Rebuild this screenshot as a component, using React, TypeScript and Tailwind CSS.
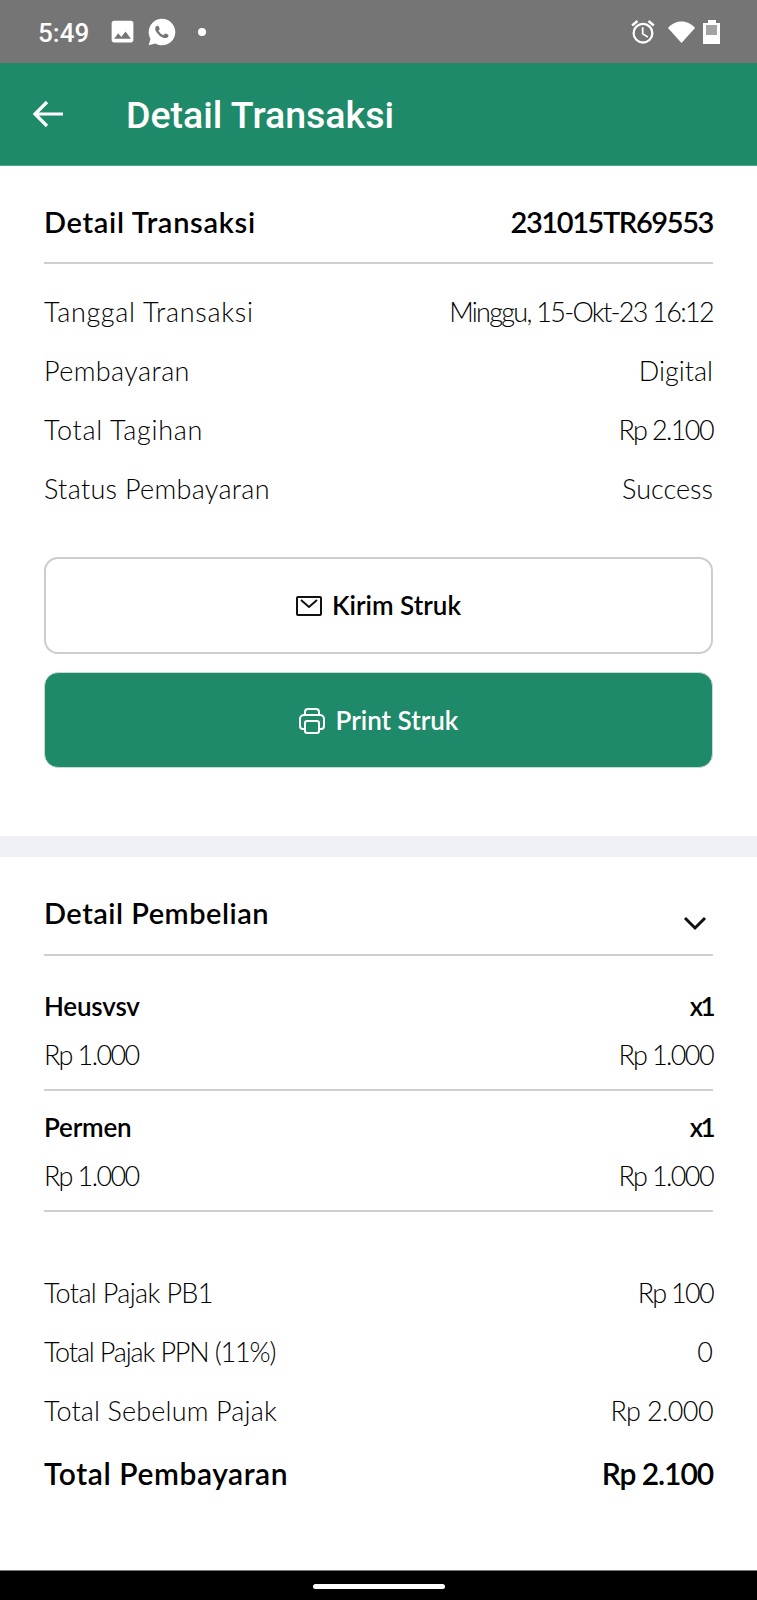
import { MdImage, MdOutlineAlarm } from 'react-icons/md'
import { RiWhatsappFill } from 'react-icons/ri'

const font = "font-['Lato','Liberation_Sans',sans-serif]"

function InfoRow({ label, value, labelCls = '', valueCls = '' }: { label: string; value: string; labelCls?: string; valueCls?: string }) {
  return (
    <div className="flex h-[59px] items-center justify-between text-[27px] font-light text-black">
      <span className={labelCls}>{label}</span>
      <span className={valueCls}>{value}</span>
    </div>
  )
}

function Item({ name, price }: { name: string; price: string }) {
  return (
    <div className="border-b-2 border-[#cfcfcf] pb-[18px] pt-[20px] text-black">
      <div className="flex items-center justify-between text-[26px] font-semibold leading-[32px]">
        <span className="tracking-[-0.200px]">{name}</span>
        <span className="tracking-[-2.500px]">x1</span>
      </div>
      <div className="mt-[17px] flex items-center justify-between text-[27px] font-light leading-[32px] tracking-[-1.600px]">
        <span>{price}</span>
        <span>{price}</span>
      </div>
    </div>
  )
}

function StatusBar() {
  return (
    <div className="flex h-[63px] items-center justify-between bg-[#757575] pl-[38px] pr-[37px] text-white">
      <div className="flex items-center">
        <span className="w-[70px] pt-[2px] font-['Roboto',sans-serif] text-[26px] font-medium leading-none">5:49</span>
        <MdImage className="text-[29px]" />
        <RiWhatsappFill className="ml-[9px] text-[32px]" />
        <span className="ml-[20px] h-[8px] w-[8px] rounded-full bg-white" />
      </div>
      <div className="flex items-center">
        <MdOutlineAlarm className="text-[28px]" />
        <svg width="27" height="22" viewBox="0 0 27 22" fill="white" className="ml-[11px]">
          <path d="M0 7C3.500 3 8 .500 13.500 .500S23.500 3 27 7L13.500 22Z" />
        </svg>
        <div className="ml-[8px] flex flex-col items-center">
          <div className="h-[3px] w-[8px] bg-white" />
          <div className="flex h-[21px] w-[17px] flex-col bg-white">
            <div className="mx-[3px] mt-[2px] h-[10px] bg-[#a3a3a3]" />
          </div>
        </div>
      </div>
    </div>
  )
}

export default function App() {
  return (
    <div className={`flex h-[1600px] w-[757px] flex-col overflow-hidden bg-white ${font}`}>
      <StatusBar />
      <header className="flex h-[103px] items-center border-b border-[#4fa78c] bg-[#1f8a6a] text-white">
        <svg width="32" height="28" viewBox="0 0 32 28" fill="none" stroke="currentColor" strokeWidth="3.2" className="ml-[32px]">
          <path d="M31 14H3M15 2 3 14l12 12" />
        </svg>
        <h1 className="ml-[62px] pt-[4px] font-['Roboto',sans-serif] text-[37.500px] font-medium leading-none">Detail Transaksi</h1>
      </header>

      <section className="px-[44px]">
        <div className="flex h-[98px] items-center justify-between border-b-2 border-[#cfcfcf] pt-[16px] text-[29px] font-semibold text-black">
          <span className="tracking-[0.700px]">Detail Transaksi</span>
          <span className="tracking-[-1.400px]">231015TR69553</span>
        </div>
        <div className="pt-[19px]">
          <InfoRow label="Tanggal Transaksi" labelCls="tracking-[0.700px]" value="Minggu, 15-Okt-23 16:12" valueCls="tracking-[-1.700px]" />
          <InfoRow label="Pembayaran" labelCls="tracking-[0.400px]" value="Digital" />
          <InfoRow label="Total Tagihan" labelCls="tracking-[0.700px]" value="Rp 2.100" valueCls="tracking-[-1.600px]" />
          <InfoRow label="Status Pembayaran" labelCls="tracking-[0.300px]" value="Success" />
        </div>
        <button className="mt-[38px] flex h-[97px] w-full items-center justify-center rounded-[14px] border-2 border-[#cdcdcd] bg-white text-[26px] font-semibold text-black">
          <svg width="26" height="20" viewBox="0 0 26 20" fill="none" stroke="#111" strokeWidth="2" className="mr-[10px]">
            <rect x="1" y="1" width="24" height="18" rx="1" />
            <path d="M5 4l8 7 8-7" />
          </svg>
          Kirim Struk
        </button>
        <button className="mt-[18px] flex h-[96px] w-full items-center justify-center rounded-[14px] border border-[#c6dcd5] bg-[#1f8a6a] pt-[1px] text-[26px] font-semibold text-white">
          <svg width="26" height="26" viewBox="0 0 26 26" fill="none" stroke="#fff" strokeWidth="2" className="mr-[11px]">
            <path d="M6 7V4a3 3 0 0 1 3-3h8a3 3 0 0 1 3 3v3" />
            <path d="M5 21H4a3 3 0 0 1-3-3v-7a4 4 0 0 1 4-4h16a4 4 0 0 1 4 4v7a3 3 0 0 1-3 3h-1" />
            <rect x="6" y="13" width="14" height="12" rx="2" />
          </svg>
          Print Struk
        </button>
      </section>

      <div className="mt-[68px] h-[21px] bg-[#eef0f5]" />

      <section className="px-[44px]">
        <div className="flex h-[99px] justify-between border-b-2 border-[#cfcfcf] text-black">
          <span className="pt-[38px] text-[29px] font-semibold leading-[36px] tracking-[0.500px]">Detail Pembelian</span>
          <svg width="24" height="15" viewBox="0 0 24 15" fill="none" stroke="#111" strokeWidth="3" className="mr-[6px] mt-[59px]">
            <path d="M2 2l10 10L22 2" />
          </svg>
        </div>
        <div className="pt-[14px]">
          <Item name="Heusvsv" price="Rp 1.000" />
          <Item name="Permen" price="Rp 1.000" />
        </div>
        <div className="pt-[52px]">
          <InfoRow label="Total Pajak PB1" labelCls="tracking-[-0.650px]" value="Rp 100" valueCls="tracking-[-1.700px]" />
          <InfoRow label="Total Pajak PPN (11%)" labelCls="tracking-[-1.150px]" value="0" />
          <InfoRow label="Total Sebelum Pajak" labelCls="tracking-[0.150px]" value="Rp 2.000" valueCls="tracking-[-0.600px]" />
          <div className="flex h-[64px] items-center justify-between text-[30px] font-semibold text-black">
            <span className="tracking-[0.570px]">Total Pembayaran</span>
            <span className="tracking-[-1.100px]">Rp 2.100</span>
          </div>
        </div>
      </section>

      <div className="mt-auto flex h-[30px] items-end justify-center border-t border-[#777] bg-black pb-[11px]">
        <div className="h-[5px] w-[132px] rounded-full bg-white" />
      </div>
    </div>
  )
}
